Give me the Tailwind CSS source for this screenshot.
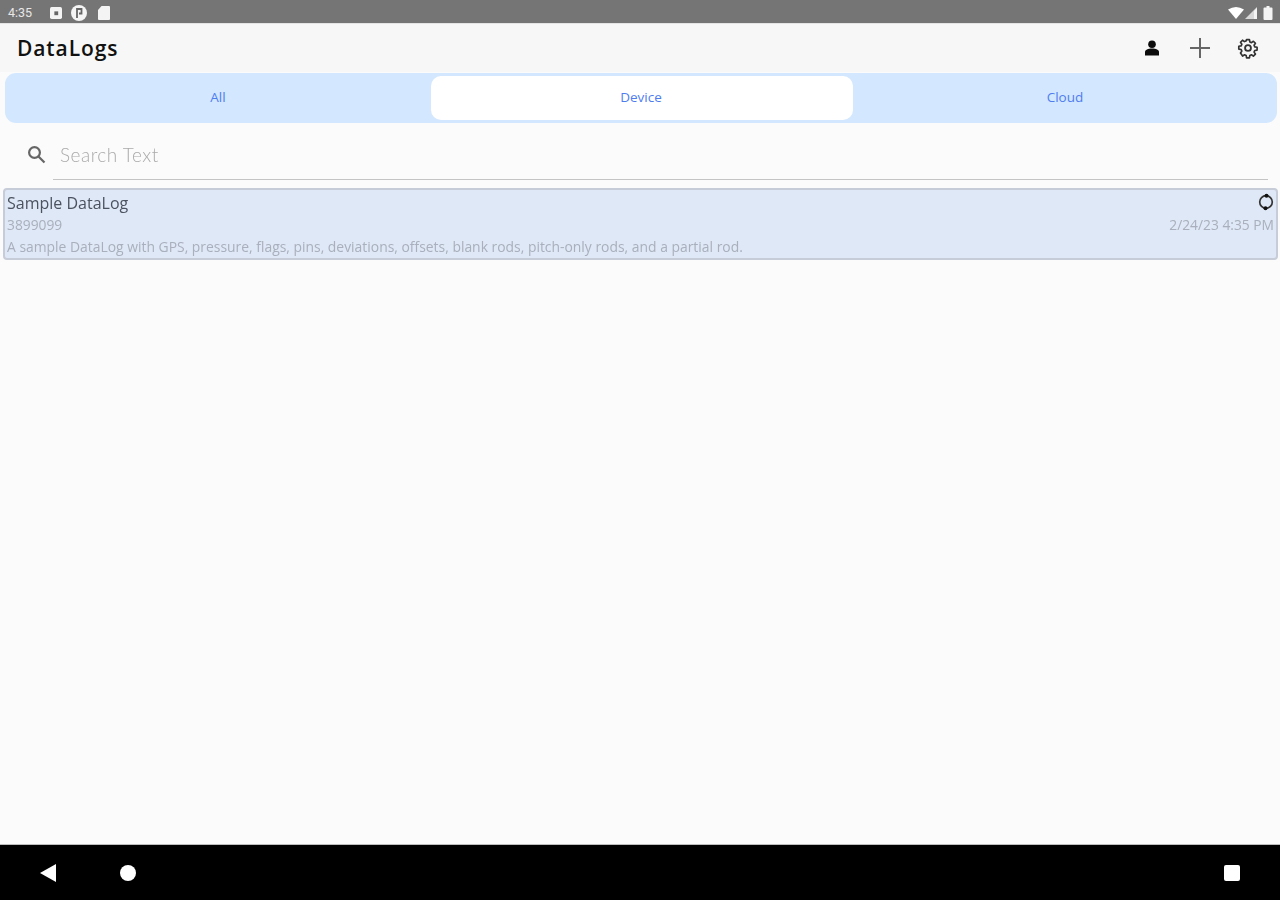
<!DOCTYPE html>
<html lang="en">
<head>
  <meta charset="UTF-8" />
  <title>DataLogs</title>
  <script src="https://cdn.jsdelivr.net/npm/@tailwindcss/browser@4"></script>
</head>
<body class="bg-[#fbfbfb] font-['Open_Sans',sans-serif]">
  <div class="w-[1280px] h-[900px] flex flex-col overflow-hidden blur-[0.6px]">

    <!-- Status bar -->
    <div class="h-[23px] bg-[#757575] flex items-center justify-between pt-[3px] pl-[8px] pr-[7px] shrink-0">
      <div class="flex items-center">
        <span class="text-[12.500px] text-[#e8e8e8] font-['Roboto',sans-serif] w-[42px]">4:35</span>
        <svg class="w-[12px] h-[12px]" viewBox="0 0 11 11"><rect width="11" height="11" rx="1.500" fill="#f4f4f4"/><rect x="4" y="4" width="3.500" height="3.500" fill="#666"/></svg>
        <svg class="w-[16px] h-[16px] ml-[9px]" viewBox="0 0 16 16"><circle cx="8" cy="8" r="8" fill="#f4f4f4"/><path d="M6 13V4h4.500v4.500H8" fill="none" stroke="#666" stroke-width="1.800"/></svg>
        <svg class="w-[12px] h-[14px] ml-[11px]" viewBox="0 0 12 14"><path d="M3.500 0H11a1 1 0 0 1 1 1v12a1 1 0 0 1-1 1H1a1 1 0 0 1-1-1V4z" fill="#f4f4f4"/></svg>
      </div>
      <div class="flex items-center">
        <svg class="w-[16px] h-[12px]" viewBox="0 0 16 12"><path d="M0 2.500Q8 -2.500 16 2.500L8 12z" fill="#fff"/></svg>
        <svg class="w-[12px] h-[12px] ml-[1px]" viewBox="0 0 12 12"><path d="M12 0V12H0z" fill="#d8d8d8"/><path d="M9 12V4L12 1V12z" fill="#f4f4f4"/></svg>
        <svg class="w-[10px] h-[14px] ml-[6px]" viewBox="0 0 9 14"><path d="M3 0h3v1.500h2a1 1 0 0 1 1 1V13a1 1 0 0 1-1 1H1a1 1 0 0 1-1-1V2.500a1 1 0 0 1 1-1h2z" fill="#f4f4f4"/></svg>
      </div>
    </div>

    <!-- App bar -->
    <div class="h-[49px] bg-[#f7f7f7] border-t border-[#e4e4e4] flex items-center justify-between pl-[17px] pr-[21px] shrink-0">
      <h1 class="text-[21px] font-semibold text-[#111] tracking-[0.9px] mt-[1px]">DataLogs</h1>
      <div class="flex items-center">
        <svg class="w-[16px] h-[16px]" viewBox="0 0 16 16" fill="#0c0c0c"><circle cx="8" cy="4.200" r="3.800"/><path d="M1 15.500V12C1 9.800 4 8.500 8 8.500s7 1.300 7 3.500v3.500z"/></svg>
        <svg class="w-[22px] h-[22px] ml-[29px]" viewBox="0 0 22 22" fill="none" stroke="#666" stroke-width="2"><path d="M11 1v20M1 11h20"/></svg>
        <svg class="w-[22px] h-[22px] ml-[26px]" viewBox="0 0 24 24" fill="none" stroke="#333" stroke-width="2" stroke-linejoin="round"><circle cx="12" cy="12" r="3.200"/><path d="M10.300 2h3.400l.5 2.800 1.900.8 2.300-1.600 2.400 2.400-1.600 2.300.8 1.900 2.800.5v3.400l-2.800.5-.8 1.900 1.600 2.300-2.400 2.400-2.300-1.600-1.900.8-.5 2.800h-3.400l-.5-2.800-1.900-.8-2.300 1.600L3.100 18l1.600-2.300-.8-1.900-2.800-.5V9.900l2.800-.5.8-1.900L3.100 5.200l2.400-2.400 2.300 1.600 1.900-.8z" transform="translate(12 12) scale(.92) translate(-12 -12)"/></svg>
      </div>
    </div>

    <!-- Tabs -->
    <div class="mt-px mx-[5px] mr-[3px] h-[50px] bg-[#d3e7fe] rounded-[11px] flex items-center px-[2px] pb-[1px] shrink-0 text-[13.500px] text-[#4f7df0]">
      <div class="w-[424px] text-center pr-[2px]">All</div>
      <div class="w-[422px] h-[44px] bg-white rounded-[10px] flex items-center justify-center pr-[2px] pb-[2px] mt-[1px]">Device</div>
      <div class="flex-1 text-center pl-[2px]">Cloud</div>
    </div>

    <!-- Search -->
    <div class="h-[57px] ml-[27px] mr-[12px] flex items-center shrink-0">
      <svg class="w-[19px] h-[19px] mt-[5px]" viewBox="0 0 19 19" fill="none" stroke="#666" stroke-width="2.200"><circle cx="7.500" cy="7.500" r="5.400"/><path d="M11.500 11.500l6 6"/></svg>
      <div class="flex-1 ml-[7px] h-full border-b border-[#c4c4c4] flex items-center pl-[7px]">
        <span class="text-[19px] text-[#aaa] font-['Lato',sans-serif] font-light tracking-[0.5px] mt-[8px]">Search Text</span>
      </div>
    </div>

    <!-- DataLog list -->
    <div class="mt-[8px] ml-[3px] mr-[2px] h-[72px] bg-[#dfe8f6] border-2 border-[#c6ccd8] rounded-[4px] pl-[2px] pr-[2px] flex flex-col shrink-0">
      <div class="h-[26px] flex items-center justify-between">
        <span class="text-[16px] text-[#4c5260]">Sample DataLog</span>
        <svg class="w-[18px] h-[18px] mt-[-2px] mr-[-1px]" viewBox="0 0 18 18" fill="none"><circle cx="9" cy="9" r="6.300" stroke="#333" stroke-width="1.700"/><circle cx="9.500" cy="2.800" r="2" fill="#111"/><circle cx="8.500" cy="15.200" r="2" fill="#111"/></svg>
      </div>
      <div class="h-[19px] flex items-center justify-between text-[13.800px] text-[#a9afbc]">
        <span>3899099</span>
        <span>2/24/23 4:35 PM</span>
      </div>
      <div class="h-[22px] pt-[3px] flex items-center text-[13.900px] text-[#a9afbc]">A sample DataLog with GPS, pressure, flags, pins, deviations, offsets, blank rods, pitch-only rods, and a partial rod.</div>
    </div>

    <div class="flex-1"></div>

    <!-- Navigation bar -->
    <div class="h-[56px] bg-black border-t border-[#bdbdbd] flex items-center shrink-0">
      <div class="flex items-center pl-[40px]">
        <svg class="w-[16px] h-[18px]" viewBox="0 0 16 18"><path d="M0 9L16 0V18z" fill="#fff"/></svg>
        <div class="w-[16px] h-[16px] rounded-full bg-white ml-[64px]"></div>
      </div>
      <div class="w-[16px] h-[16px] bg-white rounded-[2px] ml-auto mr-[40px]"></div>
    </div>
  </div>
</body>
</html>
